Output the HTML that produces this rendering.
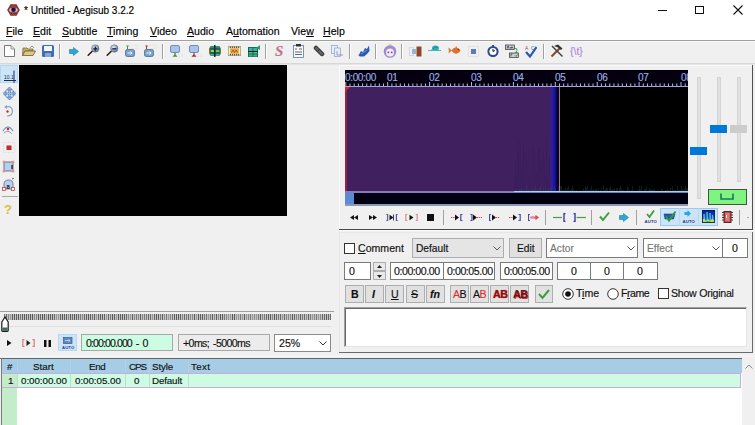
<!DOCTYPE html>
<html><head><meta charset="utf-8">
<style>
*{box-sizing:border-box;margin:0;padding:0}
html,body{width:755px;height:425px;overflow:hidden;background:#f0f0f0;font-family:"Liberation Sans",sans-serif;font-size:10px;color:#000;position:relative}
.a{position:absolute}
.t{position:absolute;white-space:nowrap;line-height:1;-webkit-text-stroke:0.15px currentColor}
u{text-decoration:none;border-bottom:1px solid #000}
</style></head><body>
<div class="a" style="left:0px;top:0px;width:755px;height:40px;background:#fff"></div>
<svg class="a" style="left:7px;top:4px;" width="13" height="12" viewBox="0 0 13 12"><polygon points="3.5,0.3 9.5,0.3 12.8,6 9.5,11.7 3.5,11.7 0.2,6" fill="#7a2e2e"/><polygon points="4,1.2 9,1.2 11.8,6 9,10.8 4,10.8 1.2,6" fill="#9a4040"/><ellipse cx="6.5" cy="6" rx="4.3" ry="2.2" fill="#e0b8c0"/><circle cx="6.5" cy="5.8" r="2.3" fill="#1a1440"/><path d="M4 9.5 H9" stroke="#6a2020" stroke-width="0.8" stroke-dasharray="1 1"/></svg>
<div class="t" style="left:24px;top:6px;font-size:10px;color:#000">* Untitled - Aegisub 3.2.2</div>
<div class="a" style="left:658px;top:10px;width:9px;height:1px;background:#111"></div>
<div class="a" style="left:695px;top:6px;width:9px;height:8px;border:1px solid #111"></div>
<svg class="a" style="left:733px;top:5px;" width="11" height="10" viewBox="0 0 11 10"><path d="M0.5 0.5 L9.5 9.5 M9.5 0.5 L0.5 9.5" stroke="#111" stroke-width="1.1"/></svg>
<div class="t" style="left:6px;top:26px;font-size:10.6px;color:#000"><span style="text-decoration:underline">F</span>ile</div>
<div class="t" style="left:33px;top:26px;font-size:10.6px;color:#000"><span style="text-decoration:underline">E</span>dit</div>
<div class="t" style="left:62px;top:26px;font-size:10.6px;color:#000"><span style="text-decoration:underline">S</span>ubtitle</div>
<div class="t" style="left:107px;top:26px;font-size:10.6px;color:#000"><span style="text-decoration:underline">T</span>iming</div>
<div class="t" style="left:150px;top:26px;font-size:10.6px;color:#000"><span style="text-decoration:underline">V</span>ideo</div>
<div class="t" style="left:187px;top:26px;font-size:10.6px;color:#000"><span style="text-decoration:underline">A</span>udio</div>
<div class="t" style="left:226px;top:26px;font-size:10.6px;color:#000">A<span style="text-decoration:underline">u</span>tomation</div>
<div class="t" style="left:291px;top:26px;font-size:10.6px;color:#000">Vie<span style="text-decoration:underline">w</span></div>
<div class="t" style="left:323px;top:26px;font-size:10.6px;color:#000"><span style="text-decoration:underline">H</span>elp</div>
<div class="a" style="left:0px;top:40px;width:755px;height:1px;background:#a0a0a0"></div>
<div class="a" style="left:0px;top:41px;width:755px;height:1px;background:#f8f8f8"></div>
<div class="a" style="left:0px;top:63px;width:755px;height:1px;background:#d8d8d8"></div>
<div class="a" style="left:0px;top:64px;width:755px;height:1px;background:#e4e4e4"></div>
<svg class="a" style="left:4px;top:45px;" width="11" height="12" viewBox="0 0 11 12"><path d="M0.5 0.5 H7 L10.5 4 V11.5 H0.5 Z" fill="#fff" stroke="#7a7a7a"/><path d="M7 0.5 V4 H10.5" fill="#ddd" stroke="#999"/></svg>
<svg class="a" style="left:22px;top:45px;" width="14" height="11" viewBox="0 0 14 11"><path d="M1 3 H5 L6 4 H11 V6 H3 L0.5 10.5 Z" fill="#c8b26a" stroke="#6e5e2a" stroke-width="0.7"/><path d="M3 6 H13.5 L11 10.5 H0.5 Z" fill="#dcc98a" stroke="#6e5e2a" stroke-width="0.8"/><path d="M8 3 Q10 -0.5 12 3" fill="none" stroke="#777" stroke-width="0.7"/></svg>
<svg class="a" style="left:42px;top:45px;" width="12" height="12" viewBox="0 0 12 12"><rect x="0" y="0" width="12" height="12" rx="1.5" fill="#3c6eb0"/><rect x="2" y="1" width="8" height="5" fill="#f4f4f4"/><rect x="3" y="8" width="6" height="4" fill="#8aa6cc"/></svg>
<div class="a" style="left:59px;top:44px;width:1px;height:15px;background:#a0a0a0"></div>
<div class="a" style="left:60px;top:44px;width:1px;height:15px;background:#fff"></div>
<svg class="a" style="left:69px;top:47px;" width="10" height="9" viewBox="0 0 10 9"><path d="M0.5 2.5 H4.5 V0.5 L9.5 4.5 L4.5 8.5 V6.5 H0.5 Z" fill="#2aa8d8" stroke="#1a7aa8" stroke-width="0.6"/></svg>
<svg class="a" style="left:87px;top:44px;" width="13" height="13" viewBox="0 0 13 13"><defs><radialGradient id="lg87" cx="0.4" cy="0.35" r="0.7"><stop offset="0" stop-color="#e8eef8"/><stop offset="0.6" stop-color="#8a9ab8"/><stop offset="1" stop-color="#4a5a7a"/></radialGradient></defs><path d="M1.2 11.2 L5.5 7" stroke="#3a1a10" stroke-width="1.6" stroke-linecap="round"/><circle cx="8.3" cy="4.5" r="3.7" fill="url(#lg87)" stroke="#6a7a98" stroke-width="0.6"/><path d="M6.3 4.8 H10.3" stroke="#1a2030" stroke-width="1.3"/><path d="M8.3 2.5 V6.8" stroke="#1a2030" stroke-width="1.3"/></svg>
<svg class="a" style="left:106px;top:44px;" width="13" height="13" viewBox="0 0 13 13"><defs><radialGradient id="lg106" cx="0.4" cy="0.35" r="0.7"><stop offset="0" stop-color="#e8eef8"/><stop offset="0.6" stop-color="#8a9ab8"/><stop offset="1" stop-color="#4a5a7a"/></radialGradient></defs><path d="M1.2 11.2 L5.5 7" stroke="#3a1a10" stroke-width="1.6" stroke-linecap="round"/><circle cx="8.3" cy="4.5" r="3.7" fill="url(#lg106)" stroke="#6a7a98" stroke-width="0.6"/><path d="M6.3 4.8 H10.3" stroke="#1a2030" stroke-width="1.3"/></svg>
<svg class="a" style="left:125px;top:45px;" width="13" height="12" viewBox="0 0 13 12"><rect x="4.5" y="0.5" width="8" height="3" fill="none" stroke="#d8d8d8" stroke-width="0.6" stroke-dasharray="1 1"/><path d="M1 0.5 H4 L2.5 2.5 Z" fill="#3a9a3a"/><rect x="2" y="2" width="1" height="2.5" fill="#3a9a3a"/><rect x="0.5" y="4.5" width="9" height="7" rx="1.8" fill="#7aa4cc" stroke="#4a6a8a" stroke-width="0.8"/><path d="M2.5 8 H7 M5.5 6.5 L7 8 L5.5 9.5" stroke="#fff" stroke-width="0.9" fill="none"/></svg>
<svg class="a" style="left:144px;top:45px;" width="13" height="12" viewBox="0 0 13 12"><rect x="4.5" y="0.5" width="8" height="3" fill="none" stroke="#d8d8d8" stroke-width="0.6" stroke-dasharray="1 1"/><path d="M1 0.5 H4 L2.5 2.5 Z" fill="#b03030"/><rect x="2" y="2" width="1" height="2.5" fill="#b03030"/><rect x="0.5" y="4.5" width="9" height="7" rx="1.8" fill="#7aa4cc" stroke="#4a6a8a" stroke-width="0.8"/><path d="M2.5 8 H7 M5.5 6.5 L7 8 L5.5 9.5" stroke="#fff" stroke-width="0.9" fill="none"/></svg>
<div class="a" style="left:162px;top:44px;width:1px;height:15px;background:#a0a0a0"></div>
<div class="a" style="left:163px;top:44px;width:1px;height:15px;background:#fff"></div>
<svg class="a" style="left:170px;top:45px;" width="13" height="12" viewBox="0 0 13 12"><rect x="0.5" y="0.5" width="9" height="7" rx="1.5" fill="#a8c4e8" stroke="#5a7aa8" stroke-width="0.8"/><rect x="4.3" y="7.5" width="1.4" height="2" fill="#777"/><path d="M2.5 11.8 L5 8.8 L7.5 11.8 Z" fill="#3a9a3a"/><rect x="7.5" y="9.5" width="5" height="2" fill="none" stroke="#d8d8d8" stroke-width="0.6" stroke-dasharray="1 1"/></svg>
<svg class="a" style="left:189px;top:45px;" width="13" height="12" viewBox="0 0 13 12"><rect x="0.5" y="0.5" width="9" height="7" rx="1.5" fill="#a8c4e8" stroke="#5a7aa8" stroke-width="0.8"/><rect x="4.3" y="7.5" width="1.4" height="2" fill="#777"/><path d="M2.5 11.8 L5 8.8 L7.5 11.8 Z" fill="#b03030"/><rect x="7.5" y="9.5" width="5" height="2" fill="none" stroke="#d8d8d8" stroke-width="0.6" stroke-dasharray="1 1"/></svg>
<svg class="a" style="left:209px;top:45px;" width="12" height="12" viewBox="0 0 12 12"><rect x="0" y="2" width="12" height="8" rx="2" fill="#8a6a2a"/><rect x="1" y="1" width="10" height="10" rx="1" fill="#2a8a7a"/><path d="M1 4 H11 M1 8 H11" stroke="#1a3a3a" stroke-width="1"/><rect x="5" y="0" width="1.5" height="12" fill="#1a2a2a"/><rect x="2" y="5" width="3" height="2" fill="#a0d040"/><rect x="7" y="5" width="3" height="2" fill="#80c040"/><rect x="1.5" y="9" width="3" height="1.5" fill="#4ab0a0"/><rect x="7" y="9" width="3" height="1.5" fill="#4ab0a0"/></svg>
<svg class="a" style="left:228px;top:46px;" width="13" height="10" viewBox="0 0 13 10"><rect x="0" y="0" width="13" height="10" rx="1" fill="#d8d0a0" stroke="#8a8060" stroke-width="0.8"/><path d="M2 1.2 H11 M2 8.8 H11" stroke="#222" stroke-width="1" stroke-dasharray="1 1"/><rect x="2.5" y="2.5" width="8" height="5" fill="#e8a050"/><path d="M3.5 6.5 L5 4 L6.5 6.5 L8 4 L9.5 6.5" stroke="#c05a10" stroke-width="1" fill="none"/><path d="M1.5 2 V8 M11.5 2 V8" stroke="#f8f0b0" stroke-width="1"/></svg>
<svg class="a" style="left:248px;top:45px;" width="12" height="12" viewBox="0 0 12 12"><rect x="0" y="2" width="10" height="10" fill="#1a6a5a"/><rect x="1" y="3" width="3.5" height="3" fill="#3ab0a0"/><rect x="5.5" y="3" width="3.5" height="3" fill="#3ab0a0"/><rect x="1" y="7" width="3.5" height="1.5" fill="#60c060"/><rect x="5.5" y="7" width="3.5" height="1.5" fill="#60c060"/><rect x="1" y="9.5" width="3.5" height="2" fill="#3ab0a0"/><rect x="5.5" y="9.5" width="3.5" height="2" fill="#3ab0a0"/><path d="M0 6.5 H10" stroke="#0a2a2a" stroke-width="1"/><path d="M8 3 L12 0 V5 Z" fill="#2a9a7a"/></svg>
<div class="a" style="left:265px;top:44px;width:1px;height:15px;background:#a0a0a0"></div>
<div class="a" style="left:266px;top:44px;width:1px;height:15px;background:#fff"></div>
<div class="t" style="left:275px;top:44px;font-size:15px;font-style:italic;font-weight:bold;color:#c87090;font-family:Liberation Serif,serif">S</div>
<svg class="a" style="left:293px;top:44px;" width="11" height="14" viewBox="0 0 11 14"><rect x="0.5" y="1.5" width="10" height="12" fill="#f8f8f8" stroke="#5a7ab0" stroke-width="0.8"/><rect x="3" y="0" width="5" height="2.5" fill="#333"/><path d="M2 5 H4 M6 5 H9 M2 8 H9 M2 10.5 H9" stroke="#555" stroke-width="0.9"/></svg>
<svg class="a" style="left:313px;top:45px;" width="12" height="12" viewBox="0 0 12 12"><path d="M3 3 L9 9" stroke="#3a3a3a" stroke-width="4.5" stroke-linecap="round"/><path d="M3 3 L9 9" stroke="#6a6a6a" stroke-width="2" stroke-linecap="round"/><path d="M4.5 6.5 L6.5 4.5" stroke="#222" stroke-width="0.8"/></svg>
<svg class="a" style="left:331px;top:45px;" width="13" height="12" viewBox="0 0 13 12"><rect x="0.5" y="0.5" width="6" height="8" fill="#e8eef8" stroke="#8aa0c8" stroke-width="0.7"/><rect x="3.5" y="3" width="6" height="8.5" fill="#e8eef8" stroke="#8aa0c8" stroke-width="0.7"/><path d="M6 6 V10 H12" stroke="#7a8aa8" stroke-width="0.8" fill="none"/></svg>
<div class="a" style="left:349px;top:44px;width:1px;height:15px;background:#a0a0a0"></div>
<div class="a" style="left:350px;top:44px;width:1px;height:15px;background:#fff"></div>
<svg class="a" style="left:358px;top:45px;" width="12" height="12" viewBox="0 0 12 12"><path d="M0.5 10.5 L3 6 L5 7 L7 3 L9 4 L11 0.5 L11.5 6 L9 9 L6 11.5 L2 11.5 Z" fill="#2a5ab0"/><path d="M3 9 L6 7 L9 5" stroke="#7aaae8" stroke-width="0.8"/></svg>
<div class="a" style="left:375px;top:44px;width:1px;height:15px;background:#a0a0a0"></div>
<div class="a" style="left:376px;top:44px;width:1px;height:15px;background:#fff"></div>
<svg class="a" style="left:383px;top:44px;" width="14" height="14" viewBox="0 0 14 14"><circle cx="7" cy="7.5" r="6.3" fill="#9a8ad8"/><circle cx="7" cy="8.5" r="4" fill="#f8e8e8"/><circle cx="5.3" cy="8.3" r="0.9" fill="#6a4aa8"/><circle cx="8.7" cy="8.3" r="0.9" fill="#6a4aa8"/><path d="M5 1.5 L7 0.3 L9 1.5" stroke="#e8c060" stroke-width="0.8" fill="none"/></svg>
<div class="a" style="left:401px;top:44px;width:1px;height:15px;background:#a0a0a0"></div>
<div class="a" style="left:402px;top:44px;width:1px;height:15px;background:#fff"></div>
<svg class="a" style="left:409px;top:46px;" width="14" height="11" viewBox="0 0 14 11"><rect x="0.5" y="1.5" width="4" height="8" fill="none" stroke="#8aa0c8" stroke-width="0.6" stroke-dasharray="1 1"/><rect x="3" y="3" width="4" height="5" fill="#9ab4d8"/><rect x="7.5" y="0.5" width="5" height="10" fill="#8a4a2a"/></svg>
<svg class="a" style="left:428px;top:45px;" width="14" height="8" viewBox="0 0 14 8"><path d="M0 5.5 H13" stroke="#3aa0b8" stroke-width="0.8"/><ellipse cx="7.5" cy="3" rx="3.5" ry="2.6" fill="#2ab0b0"/><path d="M5 4 Q7 1 9.5 2.5" stroke="#1a7a8a" stroke-width="0.7" fill="none"/><path d="M3.5 5.5 Q4 3.5 5.5 4" stroke="#2a9aa8" stroke-width="0.8" fill="none"/></svg>
<svg class="a" style="left:448px;top:46px;" width="13" height="9" viewBox="0 0 13 9"><path d="M3.5 4.5 Q6 0.3 10 2 Q12.8 3.5 12.5 4.5 Q12 6.5 9 7.5 Q6 8.5 3.5 4.5 Z" fill="#e0702a"/><path d="M0.3 1.5 L4 4.5 L0.3 7.5 Q1.5 4.5 0.3 1.5 Z" fill="#e0702a"/><path d="M7 1.3 L8.5 0.2 L9 1.8 Z" fill="#c05a20"/><circle cx="10.3" cy="3.6" r="0.6" fill="#333"/></svg>
<svg class="a" style="left:468px;top:46px;" width="11" height="11" viewBox="0 0 11 11"><rect x="0.5" y="0.5" width="10" height="10" fill="none" stroke="#b8c0d0" stroke-width="0.6" stroke-dasharray="1 1"/><rect x="3" y="3" width="5" height="5" fill="#5a7ab8"/></svg>
<svg class="a" style="left:487px;top:45px;" width="12" height="12" viewBox="0 0 12 12"><circle cx="6" cy="6.5" r="4.6" fill="#fff" stroke="#2a4a8a" stroke-width="2"/><rect x="5" y="0" width="2" height="1.5" fill="#2a4a8a"/><path d="M6 6.5 V4 M6 6.5 L7.8 5.5" stroke="#111" stroke-width="1" fill="none"/></svg>
<svg class="a" style="left:505px;top:44px;" width="15" height="14" viewBox="0 0 15 14"><rect x="0.5" y="1" width="9" height="4.5" fill="#c8d0d8" stroke="#333" stroke-width="0.7"/><path d="M2 4.5 L3 1.8 L4 4.5 M5.3 4.5 V3 M6.5 4.5 V3 Q8 2.5 8 4.5" stroke="#111" stroke-width="0.6" fill="none"/><path d="M10 4.5 Q12.5 4 12 6.5 L10.5 9 H13" stroke="#3aa040" stroke-width="1" fill="none"/><rect x="4.5" y="9" width="9" height="4.5" fill="#c8d0d8" stroke="#333" stroke-width="0.7"/><path d="M6 12.5 V10 H7.5 M10 11.5 L11 12.5 L12.5 10.5" stroke="#222" stroke-width="0.6" fill="none"/></svg>
<svg class="a" style="left:525px;top:45px;" width="12" height="13" viewBox="0 0 12 13"><path d="M1 7 L5 11.5 L11.5 2" stroke="#2a5ab0" stroke-width="2.2" fill="none"/><text x="0" y="5" font-size="5" fill="#c04040" font-family="Liberation Sans">A</text><text x="6" y="4.5" font-size="5" fill="#3a6ab0" font-family="Liberation Sans">C</text></svg>
<div class="a" style="left:543px;top:44px;width:1px;height:15px;background:#a0a0a0"></div>
<div class="a" style="left:544px;top:44px;width:1px;height:15px;background:#fff"></div>
<svg class="a" style="left:550px;top:44px;" width="14" height="14" viewBox="0 0 14 14"><path d="M1.5 12.5 L10 4" stroke="#8a4a2a" stroke-width="2.2"/><path d="M4 2 L8 0.5 L12.5 4.5 L11 6 L8 3.5 Z" fill="#333"/><path d="M2 2 L12.5 12.5" stroke="#444" stroke-width="1.5"/></svg>
<div class="t" style="left:570px;top:46px;font-size:10.5px;color:#b08ae0">{\t}</div>
<div class="a" style="left:0px;top:65px;width:18px;height:18px;background:#cce4f7;border:1px solid #b4d8f4"></div>
<svg class="a" style="left:3px;top:70px;" width="13" height="13" viewBox="0 0 13 13"><text x="1" y="9" font-size="5" font-family="Liberation Sans" fill="#1a2a5a">10.1</text><path d="M1 10.5 H13" stroke="#1a2a5a" stroke-width="1"/><path d="M11 0.5 V13" stroke="#1a2a5a" stroke-width="1"/></svg>
<svg class="a" style="left:3px;top:87px;" width="13" height="13" viewBox="0 0 13 13"><path d="M6.5 2 V11 M2 6.5 H11" stroke="#4a78b8" stroke-width="2.2"/><path d="M6.5 2 V11 M2 6.5 H11" stroke="#9cc0ec" stroke-width="1"/><path d="M6.5 0 L9.5 3 H3.5 Z M6.5 13 L9.5 10 H3.5 Z M0 6.5 L3 3.5 V9.5 Z M13 6.5 L10 3.5 V9.5 Z" fill="#8ab4e8" stroke="#4a78b8" stroke-width="0.7" stroke-linejoin="round"/></svg>
<svg class="a" style="left:3px;top:105px;" width="11" height="12" viewBox="0 0 11 12"><path d="M3 2 Q9 0.5 9.5 6 Q9.5 11 4 11" stroke="#8aa0c8" stroke-width="1.2" fill="none"/><path d="M1 2 L4 0 L4 4 Z" fill="#8aa0c8"/><circle cx="4.5" cy="6.5" r="1.2" fill="#c03030"/></svg>
<svg class="a" style="left:2px;top:123px;" width="12" height="12" viewBox="0 0 12 12"><path d="M1 8 Q6 0 11 8" stroke="#6a8ac0" stroke-width="1.2" fill="none"/><path d="M2 10 Q6 6 10 11" stroke="#8aa0c8" stroke-width="1" fill="none"/><circle cx="6" cy="6" r="1.3" fill="#c03030"/></svg>
<svg class="a" style="left:3px;top:142px;" width="12" height="11" viewBox="0 0 12 11"><rect x="0.5" y="0.5" width="11" height="10" fill="none" stroke="#d0c8c8" stroke-width="0.6" stroke-dasharray="1 1.2"/><rect x="3.5" y="3.5" width="5" height="4.5" fill="#c02a2a"/></svg>
<svg class="a" style="left:2px;top:160px;" width="13" height="13" viewBox="0 0 13 13"><rect x="2" y="2" width="9" height="9" fill="#b8d0f0" stroke="#4a5a7a" stroke-width="0.8"/><circle cx="2" cy="2" r="1.5" fill="#e89090"/><circle cx="11" cy="2" r="1.5" fill="#e89090"/><circle cx="2" cy="11" r="1.5" fill="#e89090"/><circle cx="11" cy="11" r="1.5" fill="#e89090"/><path d="M10 5 V9" stroke="#111" stroke-width="1.2"/></svg>
<svg class="a" style="left:2px;top:178px;" width="13" height="13" viewBox="0 0 13 13"><path d="M2 11 V6 Q2 2 6.5 2 Q11 2 11 6 V11 Z" fill="#b8d0f0" stroke="#5a6a8a" stroke-width="0.8"/><rect x="0.5" y="9.5" width="3" height="3" fill="#fff" stroke="#c04040" stroke-width="0.8"/><rect x="9.5" y="9.5" width="3" height="3" fill="#fff" stroke="#c04040" stroke-width="0.8"/><text x="4.5" y="11" font-size="6" font-weight="bold" font-family="Liberation Sans" fill="#111">8</text><path d="M10 1 L12 0" stroke="#333" stroke-width="0.8"/></svg>
<div class="a" style="left:2px;top:196px;width:16px;height:1px;background:#a8a8a8"></div>
<div class="t" style="left:4px;top:203px;font-size:13px;font-weight:bold;color:#d8c050">?</div>
<div class="a" style="left:19px;top:65px;width:268px;height:151px;background:#000"></div>
<div class="a" style="left:0px;top:311px;width:334px;height:1px;background:#a0a0a0"></div>
<svg class="a" style="left:4px;top:314px;" width="327" height="6" viewBox="0 0 327 6"><rect width="327" height="6" fill="#c4c4c4"/><rect x="0" y="0" width="1" height="6" fill="#7a7a7a"/><rect x="2" y="0" width="1" height="6" fill="#6a6a6a"/><rect x="4" y="0" width="1" height="6" fill="#8a8a8a"/><rect x="6" y="0" width="1" height="6" fill="#9a9a9a"/><rect x="8" y="0" width="1" height="6" fill="#5a5a5a"/><rect x="10" y="0" width="1" height="6" fill="#5a5a5a"/><rect x="12" y="0" width="1" height="6" fill="#606060"/><rect x="14" y="0" width="1" height="6" fill="#5a5a5a"/><rect x="16" y="0" width="1" height="6" fill="#7a7a7a"/><rect x="18" y="0" width="1" height="6" fill="#606060"/><rect x="20" y="0" width="1" height="6" fill="#5a5a5a"/><rect x="22" y="0" width="1" height="6" fill="#606060"/><rect x="24" y="0" width="1" height="6" fill="#6a6a6a"/><rect x="26" y="0" width="1" height="6" fill="#5a5a5a"/><rect x="28" y="0" width="1" height="6" fill="#5a5a5a"/><rect x="30" y="0" width="1" height="6" fill="#8a8a8a"/><rect x="32" y="0" width="1" height="6" fill="#8a8a8a"/><rect x="34" y="0" width="1" height="6" fill="#5a5a5a"/><rect x="36" y="0" width="1" height="6" fill="#6a6a6a"/><rect x="38" y="0" width="1" height="6" fill="#5a5a5a"/><rect x="40" y="0" width="1" height="6" fill="#606060"/><rect x="42" y="0" width="1" height="6" fill="#8a8a8a"/><rect x="44" y="0" width="1" height="6" fill="#5a5a5a"/><rect x="46" y="0" width="1" height="6" fill="#606060"/><rect x="48" y="0" width="1" height="6" fill="#5a5a5a"/><rect x="50" y="0" width="1" height="6" fill="#6a6a6a"/><rect x="52" y="0" width="1" height="6" fill="#9a9a9a"/><rect x="54" y="0" width="1" height="6" fill="#9a9a9a"/><rect x="56" y="0" width="1" height="6" fill="#606060"/><rect x="58" y="0" width="1" height="6" fill="#5a5a5a"/><rect x="60" y="0" width="1" height="6" fill="#606060"/><rect x="62" y="0" width="1" height="6" fill="#606060"/><rect x="64" y="0" width="1" height="6" fill="#8a8a8a"/><rect x="66" y="0" width="1" height="6" fill="#5a5a5a"/><rect x="68" y="0" width="1" height="6" fill="#6a6a6a"/><rect x="70" y="0" width="1" height="6" fill="#5a5a5a"/><rect x="72" y="0" width="1" height="6" fill="#606060"/><rect x="74" y="0" width="1" height="6" fill="#6a6a6a"/><rect x="76" y="0" width="1" height="6" fill="#7a7a7a"/><rect x="78" y="0" width="1" height="6" fill="#8a8a8a"/><rect x="80" y="0" width="1" height="6" fill="#6a6a6a"/><rect x="82" y="0" width="1" height="6" fill="#606060"/><rect x="84" y="0" width="1" height="6" fill="#5a5a5a"/><rect x="86" y="0" width="1" height="6" fill="#606060"/><rect x="88" y="0" width="1" height="6" fill="#7a7a7a"/><rect x="90" y="0" width="1" height="6" fill="#606060"/><rect x="92" y="0" width="1" height="6" fill="#9a9a9a"/><rect x="94" y="0" width="1" height="6" fill="#6a6a6a"/><rect x="96" y="0" width="1" height="6" fill="#5a5a5a"/><rect x="98" y="0" width="1" height="6" fill="#606060"/><rect x="100" y="0" width="1" height="6" fill="#606060"/><rect x="102" y="0" width="1" height="6" fill="#9a9a9a"/><rect x="104" y="0" width="1" height="6" fill="#6a6a6a"/><rect x="106" y="0" width="1" height="6" fill="#7a7a7a"/><rect x="108" y="0" width="1" height="6" fill="#5a5a5a"/><rect x="110" y="0" width="1" height="6" fill="#606060"/><rect x="112" y="0" width="1" height="6" fill="#9a9a9a"/><rect x="114" y="0" width="1" height="6" fill="#5a5a5a"/><rect x="116" y="0" width="1" height="6" fill="#606060"/><rect x="118" y="0" width="1" height="6" fill="#5a5a5a"/><rect x="120" y="0" width="1" height="6" fill="#606060"/><rect x="122" y="0" width="1" height="6" fill="#6a6a6a"/><rect x="124" y="0" width="1" height="6" fill="#8a8a8a"/><rect x="126" y="0" width="1" height="6" fill="#9a9a9a"/><rect x="128" y="0" width="1" height="6" fill="#606060"/><rect x="130" y="0" width="1" height="6" fill="#8a8a8a"/><rect x="132" y="0" width="1" height="6" fill="#7a7a7a"/><rect x="134" y="0" width="1" height="6" fill="#8a8a8a"/><rect x="136" y="0" width="1" height="6" fill="#606060"/><rect x="138" y="0" width="1" height="6" fill="#8a8a8a"/><rect x="140" y="0" width="1" height="6" fill="#7a7a7a"/><rect x="142" y="0" width="1" height="6" fill="#7a7a7a"/><rect x="144" y="0" width="1" height="6" fill="#6a6a6a"/><rect x="146" y="0" width="1" height="6" fill="#6a6a6a"/><rect x="148" y="0" width="1" height="6" fill="#9a9a9a"/><rect x="150" y="0" width="1" height="6" fill="#6a6a6a"/><rect x="152" y="0" width="1" height="6" fill="#5a5a5a"/><rect x="154" y="0" width="1" height="6" fill="#606060"/><rect x="156" y="0" width="1" height="6" fill="#7a7a7a"/><rect x="158" y="0" width="1" height="6" fill="#606060"/><rect x="160" y="0" width="1" height="6" fill="#8a8a8a"/><rect x="162" y="0" width="1" height="6" fill="#7a7a7a"/><rect x="164" y="0" width="1" height="6" fill="#9a9a9a"/><rect x="166" y="0" width="1" height="6" fill="#8a8a8a"/><rect x="168" y="0" width="1" height="6" fill="#7a7a7a"/><rect x="170" y="0" width="1" height="6" fill="#606060"/><rect x="172" y="0" width="1" height="6" fill="#5a5a5a"/><rect x="174" y="0" width="1" height="6" fill="#5a5a5a"/><rect x="176" y="0" width="1" height="6" fill="#606060"/><rect x="178" y="0" width="1" height="6" fill="#8a8a8a"/><rect x="180" y="0" width="1" height="6" fill="#6a6a6a"/><rect x="182" y="0" width="1" height="6" fill="#7a7a7a"/><rect x="184" y="0" width="1" height="6" fill="#6a6a6a"/><rect x="186" y="0" width="1" height="6" fill="#8a8a8a"/><rect x="188" y="0" width="1" height="6" fill="#8a8a8a"/><rect x="190" y="0" width="1" height="6" fill="#5a5a5a"/><rect x="192" y="0" width="1" height="6" fill="#9a9a9a"/><rect x="194" y="0" width="1" height="6" fill="#5a5a5a"/><rect x="196" y="0" width="1" height="6" fill="#606060"/><rect x="198" y="0" width="1" height="6" fill="#606060"/><rect x="200" y="0" width="1" height="6" fill="#7a7a7a"/><rect x="202" y="0" width="1" height="6" fill="#7a7a7a"/><rect x="204" y="0" width="1" height="6" fill="#9a9a9a"/><rect x="206" y="0" width="1" height="6" fill="#7a7a7a"/><rect x="208" y="0" width="1" height="6" fill="#606060"/><rect x="210" y="0" width="1" height="6" fill="#8a8a8a"/><rect x="212" y="0" width="1" height="6" fill="#606060"/><rect x="214" y="0" width="1" height="6" fill="#8a8a8a"/><rect x="216" y="0" width="1" height="6" fill="#5a5a5a"/><rect x="218" y="0" width="1" height="6" fill="#5a5a5a"/><rect x="220" y="0" width="1" height="6" fill="#7a7a7a"/><rect x="222" y="0" width="1" height="6" fill="#8a8a8a"/><rect x="224" y="0" width="1" height="6" fill="#9a9a9a"/><rect x="226" y="0" width="1" height="6" fill="#9a9a9a"/><rect x="228" y="0" width="1" height="6" fill="#5a5a5a"/><rect x="230" y="0" width="1" height="6" fill="#5a5a5a"/><rect x="232" y="0" width="1" height="6" fill="#9a9a9a"/><rect x="234" y="0" width="1" height="6" fill="#9a9a9a"/><rect x="236" y="0" width="1" height="6" fill="#7a7a7a"/><rect x="238" y="0" width="1" height="6" fill="#9a9a9a"/><rect x="240" y="0" width="1" height="6" fill="#606060"/><rect x="242" y="0" width="1" height="6" fill="#9a9a9a"/><rect x="244" y="0" width="1" height="6" fill="#8a8a8a"/><rect x="246" y="0" width="1" height="6" fill="#7a7a7a"/><rect x="248" y="0" width="1" height="6" fill="#9a9a9a"/><rect x="250" y="0" width="1" height="6" fill="#8a8a8a"/><rect x="252" y="0" width="1" height="6" fill="#9a9a9a"/><rect x="254" y="0" width="1" height="6" fill="#7a7a7a"/><rect x="256" y="0" width="1" height="6" fill="#5a5a5a"/><rect x="258" y="0" width="1" height="6" fill="#8a8a8a"/><rect x="260" y="0" width="1" height="6" fill="#7a7a7a"/><rect x="262" y="0" width="1" height="6" fill="#6a6a6a"/><rect x="264" y="0" width="1" height="6" fill="#606060"/><rect x="266" y="0" width="1" height="6" fill="#5a5a5a"/><rect x="268" y="0" width="1" height="6" fill="#8a8a8a"/><rect x="270" y="0" width="1" height="6" fill="#5a5a5a"/><rect x="272" y="0" width="1" height="6" fill="#6a6a6a"/><rect x="274" y="0" width="1" height="6" fill="#7a7a7a"/><rect x="276" y="0" width="1" height="6" fill="#6a6a6a"/><rect x="278" y="0" width="1" height="6" fill="#9a9a9a"/><rect x="280" y="0" width="1" height="6" fill="#6a6a6a"/><rect x="282" y="0" width="1" height="6" fill="#8a8a8a"/><rect x="284" y="0" width="1" height="6" fill="#8a8a8a"/><rect x="286" y="0" width="1" height="6" fill="#8a8a8a"/><rect x="288" y="0" width="1" height="6" fill="#5a5a5a"/><rect x="290" y="0" width="1" height="6" fill="#6a6a6a"/><rect x="292" y="0" width="1" height="6" fill="#8a8a8a"/><rect x="294" y="0" width="1" height="6" fill="#8a8a8a"/><rect x="296" y="0" width="1" height="6" fill="#606060"/><rect x="298" y="0" width="1" height="6" fill="#7a7a7a"/><rect x="300" y="0" width="1" height="6" fill="#6a6a6a"/><rect x="302" y="0" width="1" height="6" fill="#8a8a8a"/><rect x="304" y="0" width="1" height="6" fill="#606060"/><rect x="306" y="0" width="1" height="6" fill="#7a7a7a"/><rect x="308" y="0" width="1" height="6" fill="#9a9a9a"/><rect x="310" y="0" width="1" height="6" fill="#8a8a8a"/><rect x="312" y="0" width="1" height="6" fill="#7a7a7a"/><rect x="314" y="0" width="1" height="6" fill="#9a9a9a"/><rect x="316" y="0" width="1" height="6" fill="#8a8a8a"/><rect x="318" y="0" width="1" height="6" fill="#6a6a6a"/><rect x="320" y="0" width="1" height="6" fill="#6a6a6a"/><rect x="322" y="0" width="1" height="6" fill="#5a5a5a"/><rect x="324" y="0" width="1" height="6" fill="#6a6a6a"/><rect x="326" y="0" width="1" height="6" fill="#6a6a6a"/></svg>
<div class="a" style="left:3px;top:326px;width:328px;height:1px;background:#e0e0e0"></div>
<svg class="a" style="left:1px;top:316px;" width="8" height="16" viewBox="0 0 8 16"><path d="M0.8 6 L4 1 L7.2 6 V14.6 Q7.2 15.3 6.5 15.3 H1.5 Q0.8 15.3 0.8 14.6 Z" fill="#fff" stroke="#1a1a1a" stroke-width="1.2"/><rect x="1.4" y="11.5" width="5.2" height="3.3" fill="#3a6a5a"/></svg>
<svg class="a" style="left:7px;top:340px;" width="5" height="6" viewBox="0 0 5 6"><path d="M0 0 L4.5 3 L0 6 Z" fill="#111"/></svg>
<svg class="a" style="left:22px;top:339px;" width="13" height="8" viewBox="0 0 13 8"><path d="M2.5 0.6 H0.8 V7.4 H2.5 M10.5 0.6 H12.2 V7.4 H10.5" stroke="#e07878" stroke-width="1.2" fill="none"/><path d="M4.5 1 L8.5 4 L4.5 7 Z" fill="#222"/></svg>
<svg class="a" style="left:44px;top:340px;" width="7" height="7" viewBox="0 0 7 7"><rect x="0" y="0" width="2.5" height="7" fill="#111"/><rect x="4.5" y="0" width="2.5" height="7" fill="#111"/></svg>
<div class="a" style="left:58px;top:334px;width:19px;height:17px;background:#cce4f7;border:1px solid #b4d8f4"></div>
<svg class="a" style="left:60px;top:336px;" width="15" height="14" viewBox="0 0 15 14"><rect x="3.5" y="1.5" width="8.5" height="6" fill="#5a8ac8" stroke="#3a5a8a" stroke-width="0.7"/><path d="M5 4.5 H10 M8.5 3.3 L10 4.5 L8.5 5.7" stroke="#dfe8f8" stroke-width="0.7" fill="none"/><text x="2" y="12.8" font-size="4.2" font-family="Liberation Sans" font-weight="bold" fill="#2a3a8a" letter-spacing="0.15">AUTO</text></svg>
<div class="a" style="left:81px;top:334px;width:92px;height:17px;background:#ccfde2;border:1px solid #a8a8a8"></div>
<div class="t" style="left:86px;top:338px;font-size:10.6px;letter-spacing:-0.92px;word-spacing:2px;color:#111">0:00:00.000 - 0</div>
<div class="a" style="left:178px;top:334px;width:92px;height:17px;background:#ececec;border:1px solid #a8a8a8"></div>
<div class="t" style="left:183px;top:338px;font-size:10.6px;letter-spacing:-0.6px;word-spacing:1.5px;color:#111">+0ms; -5000ms</div>
<div class="a" style="left:274px;top:334px;width:57px;height:18px;background:#fff;border:1px solid #8a8a8a"></div>
<div class="t" style="left:279px;top:338px;font-size:10.6px;color:#111">25%</div>
<svg class="a" style="left:319px;top:341px;" width="8" height="5" viewBox="0 0 8 5"><path d="M0.5 0.5 L4 4 L7.5 0.5" stroke="#333" stroke-width="1" fill="none"/></svg>
<div class="a" style="left:339px;top:65px;width:1px;height:164px;background:#fafafa"></div>
<div class="a" style="left:340px;top:65px;width:412px;height:1px;background:#fafafa"></div>
<div class="a" style="left:752px;top:65px;width:1px;height:164px;background:#505050"></div>
<div class="a" style="left:339px;top:229px;width:414px;height:1px;background:#484848"></div>
<div class="a" style="left:339px;top:230px;width:414px;height:1px;background:#fafafa"></div>
<div class="a" style="left:345px;top:70px;width:343px;height:136px;background:#000"></div>
<svg class="a" style="left:345px;top:70px;" width="343" height="17" viewBox="0 0 343 17"><rect width="343" height="16" fill="#050010"/><rect x="0.30" y="12" width="1" height="4" fill="#b4bce0"/><rect x="4.49" y="13.5" width="1" height="2.5" fill="#b4bce0"/><rect x="8.68" y="13.5" width="1" height="2.5" fill="#b4bce0"/><rect x="12.87" y="13.5" width="1" height="2.5" fill="#b4bce0"/><rect x="17.06" y="13.5" width="1" height="2.5" fill="#b4bce0"/><rect x="21.25" y="13.5" width="1" height="2.5" fill="#b4bce0"/><rect x="25.44" y="13.5" width="1" height="2.5" fill="#b4bce0"/><rect x="29.63" y="13.5" width="1" height="2.5" fill="#b4bce0"/><rect x="33.82" y="13.5" width="1" height="2.5" fill="#b4bce0"/><rect x="38.01" y="13.5" width="1" height="2.5" fill="#b4bce0"/><rect x="42.20" y="12" width="1" height="4" fill="#b4bce0"/><rect x="46.39" y="13.5" width="1" height="2.5" fill="#b4bce0"/><rect x="50.58" y="13.5" width="1" height="2.5" fill="#b4bce0"/><rect x="54.77" y="13.5" width="1" height="2.5" fill="#b4bce0"/><rect x="58.96" y="13.5" width="1" height="2.5" fill="#b4bce0"/><rect x="63.15" y="13.5" width="1" height="2.5" fill="#b4bce0"/><rect x="67.34" y="13.5" width="1" height="2.5" fill="#b4bce0"/><rect x="71.53" y="13.5" width="1" height="2.5" fill="#b4bce0"/><rect x="75.72" y="13.5" width="1" height="2.5" fill="#b4bce0"/><rect x="79.91" y="13.5" width="1" height="2.5" fill="#b4bce0"/><rect x="84.10" y="12" width="1" height="4" fill="#b4bce0"/><rect x="88.29" y="13.5" width="1" height="2.5" fill="#b4bce0"/><rect x="92.48" y="13.5" width="1" height="2.5" fill="#b4bce0"/><rect x="96.67" y="13.5" width="1" height="2.5" fill="#b4bce0"/><rect x="100.86" y="13.5" width="1" height="2.5" fill="#b4bce0"/><rect x="105.05" y="13.5" width="1" height="2.5" fill="#b4bce0"/><rect x="109.24" y="13.5" width="1" height="2.5" fill="#b4bce0"/><rect x="113.43" y="13.5" width="1" height="2.5" fill="#b4bce0"/><rect x="117.62" y="13.5" width="1" height="2.5" fill="#b4bce0"/><rect x="121.81" y="13.5" width="1" height="2.5" fill="#b4bce0"/><rect x="126.00" y="12" width="1" height="4" fill="#b4bce0"/><rect x="130.19" y="13.5" width="1" height="2.5" fill="#b4bce0"/><rect x="134.38" y="13.5" width="1" height="2.5" fill="#b4bce0"/><rect x="138.57" y="13.5" width="1" height="2.5" fill="#b4bce0"/><rect x="142.76" y="13.5" width="1" height="2.5" fill="#b4bce0"/><rect x="146.95" y="13.5" width="1" height="2.5" fill="#b4bce0"/><rect x="151.14" y="13.5" width="1" height="2.5" fill="#b4bce0"/><rect x="155.33" y="13.5" width="1" height="2.5" fill="#b4bce0"/><rect x="159.52" y="13.5" width="1" height="2.5" fill="#b4bce0"/><rect x="163.71" y="13.5" width="1" height="2.5" fill="#b4bce0"/><rect x="167.90" y="12" width="1" height="4" fill="#b4bce0"/><rect x="172.09" y="13.5" width="1" height="2.5" fill="#b4bce0"/><rect x="176.28" y="13.5" width="1" height="2.5" fill="#b4bce0"/><rect x="180.47" y="13.5" width="1" height="2.5" fill="#b4bce0"/><rect x="184.66" y="13.5" width="1" height="2.5" fill="#b4bce0"/><rect x="188.85" y="13.5" width="1" height="2.5" fill="#b4bce0"/><rect x="193.04" y="13.5" width="1" height="2.5" fill="#b4bce0"/><rect x="197.23" y="13.5" width="1" height="2.5" fill="#b4bce0"/><rect x="201.42" y="13.5" width="1" height="2.5" fill="#b4bce0"/><rect x="205.61" y="13.5" width="1" height="2.5" fill="#b4bce0"/><rect x="209.80" y="12" width="1" height="4" fill="#b4bce0"/><rect x="213.99" y="13.5" width="1" height="2.5" fill="#b4bce0"/><rect x="218.18" y="13.5" width="1" height="2.5" fill="#b4bce0"/><rect x="222.37" y="13.5" width="1" height="2.5" fill="#b4bce0"/><rect x="226.56" y="13.5" width="1" height="2.5" fill="#b4bce0"/><rect x="230.75" y="13.5" width="1" height="2.5" fill="#b4bce0"/><rect x="234.94" y="13.5" width="1" height="2.5" fill="#b4bce0"/><rect x="239.13" y="13.5" width="1" height="2.5" fill="#b4bce0"/><rect x="243.32" y="13.5" width="1" height="2.5" fill="#b4bce0"/><rect x="247.51" y="13.5" width="1" height="2.5" fill="#b4bce0"/><rect x="251.70" y="12" width="1" height="4" fill="#b4bce0"/><rect x="255.89" y="13.5" width="1" height="2.5" fill="#b4bce0"/><rect x="260.08" y="13.5" width="1" height="2.5" fill="#b4bce0"/><rect x="264.27" y="13.5" width="1" height="2.5" fill="#b4bce0"/><rect x="268.46" y="13.5" width="1" height="2.5" fill="#b4bce0"/><rect x="272.65" y="13.5" width="1" height="2.5" fill="#b4bce0"/><rect x="276.84" y="13.5" width="1" height="2.5" fill="#b4bce0"/><rect x="281.03" y="13.5" width="1" height="2.5" fill="#b4bce0"/><rect x="285.22" y="13.5" width="1" height="2.5" fill="#b4bce0"/><rect x="289.41" y="13.5" width="1" height="2.5" fill="#b4bce0"/><rect x="293.60" y="12" width="1" height="4" fill="#b4bce0"/><rect x="297.79" y="13.5" width="1" height="2.5" fill="#b4bce0"/><rect x="301.98" y="13.5" width="1" height="2.5" fill="#b4bce0"/><rect x="306.17" y="13.5" width="1" height="2.5" fill="#b4bce0"/><rect x="310.36" y="13.5" width="1" height="2.5" fill="#b4bce0"/><rect x="314.55" y="13.5" width="1" height="2.5" fill="#b4bce0"/><rect x="318.74" y="13.5" width="1" height="2.5" fill="#b4bce0"/><rect x="322.93" y="13.5" width="1" height="2.5" fill="#b4bce0"/><rect x="327.12" y="13.5" width="1" height="2.5" fill="#b4bce0"/><rect x="331.31" y="13.5" width="1" height="2.5" fill="#b4bce0"/><rect x="335.50" y="12" width="1" height="4" fill="#b4bce0"/><rect x="339.69" y="13.5" width="1" height="2.5" fill="#b4bce0"/><rect x="0" y="16" width="343" height="1" fill="#a8a0d8"/></svg>
<div class="a" style="left:345px;top:70px;width:343px;height:16px;overflow:hidden">
<div class="t" style="left:0px;top:3px;font-size:10px;color:#9aaee0;letter-spacing:-0.35px">0:00:00</div>
<div class="t" style="left:42px;top:3px;font-size:10px;color:#9aaee0;letter-spacing:-0.35px">01</div>
<div class="t" style="left:84px;top:3px;font-size:10px;color:#9aaee0;letter-spacing:-0.35px">02</div>
<div class="t" style="left:126px;top:3px;font-size:10px;color:#9aaee0;letter-spacing:-0.35px">03</div>
<div class="t" style="left:168px;top:3px;font-size:10px;color:#9aaee0;letter-spacing:-0.35px">04</div>
<div class="t" style="left:210px;top:3px;font-size:10px;color:#9aaee0;letter-spacing:-0.35px">05</div>
<div class="t" style="left:252px;top:3px;font-size:10px;color:#9aaee0;letter-spacing:-0.35px">06</div>
<div class="t" style="left:293px;top:3px;font-size:10px;color:#9aaee0;letter-spacing:-0.35px">07</div>
<div class="t" style="left:336px;top:3px;font-size:10px;color:#9aaee0;letter-spacing:-0.35px">08</div>
</div>
<div class="a" style="left:345px;top:87px;width:205px;height:105px;background:#40205e"></div>
<div class="a" style="left:345px;top:87px;width:206px;height:105px;background:#40205e"></div>
<svg class="a" style="left:550px;top:87px;" width="9" height="105" viewBox="0 0 9 105"><defs><linearGradient id="bg1" x1="0" x2="1"><stop offset="0" stop-color="#3a2270"/><stop offset="0.3" stop-color="#2a1aa8"/><stop offset="0.6" stop-color="#12108a"/><stop offset="0.8" stop-color="#000030"/><stop offset="1" stop-color="#000"/></linearGradient></defs><rect width="9" height="105" fill="url(#bg1)"/></svg>
<div class="a" style="left:559px;top:87px;width:1px;height:105px;background:#b06aa0"></div>
<div class="a" style="left:345px;top:87px;width:2px;height:104px;background:#9a2040"></div>
<svg class="a" style="left:345px;top:87px;" width="5" height="5" viewBox="0 0 5 5"><path d="M0 0 H5 L0 5 Z" fill="#e02020"/></svg>
<svg class="a" style="left:514px;top:87px;" width="36" height="105" viewBox="0 0 36 105"><rect x="0" y="89" width="1" height="16" fill="#30185a" opacity="0.2"/><rect x="1" y="72" width="1" height="33" fill="#30185a" opacity="0.3"/><rect x="2" y="91" width="1" height="14" fill="#30185a" opacity="0.3"/><rect x="3" y="51" width="1" height="54" fill="#30185a" opacity="0.2"/><rect x="4" y="65" width="1" height="40" fill="#30185a" opacity="0.3"/><rect x="5" y="53" width="1" height="52" fill="#30185a" opacity="0.12"/><rect x="6" y="57" width="1" height="48" fill="#30185a" opacity="0.2"/><rect x="7" y="80" width="1" height="25" fill="#30185a" opacity="0.12"/><rect x="8" y="74" width="1" height="31" fill="#30185a" opacity="0.3"/><rect x="9" y="56" width="1" height="49" fill="#30185a" opacity="0.3"/><rect x="10" y="65" width="1" height="40" fill="#30185a" opacity="0.12"/><rect x="11" y="63" width="1" height="42" fill="#30185a" opacity="0.2"/><rect x="12" y="67" width="1" height="38" fill="#30185a" opacity="0.12"/><rect x="13" y="74" width="1" height="31" fill="#30185a" opacity="0.12"/><rect x="14" y="54" width="1" height="51" fill="#30185a" opacity="0.12"/><rect x="15" y="89" width="1" height="16" fill="#30185a" opacity="0.3"/><rect x="16" y="78" width="1" height="27" fill="#30185a" opacity="0.12"/><rect x="17" y="58" width="1" height="47" fill="#30185a" opacity="0.12"/><rect x="18" y="50" width="1" height="55" fill="#30185a" opacity="0.12"/><rect x="19" y="63" width="1" height="42" fill="#30185a" opacity="0.12"/><rect x="20" y="60" width="1" height="45" fill="#30185a" opacity="0.2"/><rect x="21" y="70" width="1" height="35" fill="#30185a" opacity="0.12"/><rect x="22" y="84" width="1" height="21" fill="#30185a" opacity="0.3"/><rect x="23" y="90" width="1" height="15" fill="#30185a" opacity="0.12"/><rect x="24" y="61" width="1" height="44" fill="#30185a" opacity="0.3"/><rect x="25" y="62" width="1" height="43" fill="#30185a" opacity="0.2"/><rect x="26" y="69" width="1" height="36" fill="#30185a" opacity="0.12"/><rect x="27" y="73" width="1" height="32" fill="#30185a" opacity="0.2"/><rect x="28" y="60" width="1" height="45" fill="#30185a" opacity="0.12"/><rect x="29" y="66" width="1" height="39" fill="#30185a" opacity="0.12"/><rect x="30" y="71" width="1" height="34" fill="#30185a" opacity="0.2"/><rect x="31" y="88" width="1" height="17" fill="#30185a" opacity="0.3"/><rect x="32" y="50" width="1" height="55" fill="#30185a" opacity="0.3"/><rect x="33" y="93" width="1" height="12" fill="#30185a" opacity="0.3"/><rect x="34" y="71" width="1" height="34" fill="#30185a" opacity="0.12"/><rect x="35" y="69" width="1" height="36" fill="#30185a" opacity="0.2"/></svg>
<svg class="a" style="left:514px;top:185px;" width="174" height="7" viewBox="0 0 174 7"><rect x="1" y="4" width="1" height="2" fill="#2a4a6a" opacity="0.35"/><rect x="2" y="4" width="1" height="2" fill="#2a4a6a" opacity="0.35"/><rect x="4" y="5" width="1" height="1" fill="#2a4a6a" opacity="0.35"/><rect x="5" y="4" width="1" height="2" fill="#2a4a6a" opacity="0.35"/><rect x="6" y="5" width="1" height="1" fill="#2a4a6a" opacity="0.35"/><rect x="7" y="3" width="1" height="3" fill="#2a4a6a" opacity="0.35"/><rect x="8" y="4" width="1" height="2" fill="#2a4a6a" opacity="0.35"/><rect x="10" y="4" width="1" height="2" fill="#2a4a6a" opacity="0.35"/><rect x="12" y="1" width="1" height="5" fill="#2a4a6a" opacity="0.35"/><rect x="13" y="5" width="1" height="1" fill="#2a4a6a" opacity="0.35"/><rect x="14" y="5" width="1" height="1" fill="#2a4a6a" opacity="0.35"/><rect x="15" y="4" width="1" height="2" fill="#2a4a6a" opacity="0.35"/><rect x="18" y="3" width="1" height="3" fill="#2a4a6a" opacity="0.35"/><rect x="19" y="5" width="1" height="1" fill="#2a4a6a" opacity="0.35"/><rect x="20" y="4" width="1" height="2" fill="#2a4a6a" opacity="0.35"/><rect x="21" y="1" width="1" height="5" fill="#2a4a6a" opacity="0.35"/><rect x="22" y="4" width="1" height="2" fill="#2a4a6a" opacity="0.35"/><rect x="23" y="5" width="1" height="1" fill="#2a4a6a" opacity="0.35"/><rect x="24" y="5" width="1" height="1" fill="#2a4a6a" opacity="0.35"/><rect x="25" y="3" width="1" height="3" fill="#2a4a6a" opacity="0.35"/><rect x="26" y="1" width="1" height="5" fill="#2a4a6a" opacity="0.35"/><rect x="29" y="3" width="1" height="3" fill="#2a4a6a" opacity="0.35"/><rect x="31" y="1" width="1" height="5" fill="#2a4a6a" opacity="0.35"/><rect x="32" y="4" width="1" height="2" fill="#2a4a6a" opacity="0.35"/><rect x="33" y="5" width="1" height="1" fill="#2a4a6a" opacity="0.35"/><rect x="34" y="3" width="1" height="3" fill="#2a4a6a" opacity="0.35"/><rect x="36" y="3" width="1" height="3" fill="#2a4a6a" opacity="0.35"/><rect x="37" y="1" width="1" height="5" fill="#2a4a6a" opacity="0.35"/><rect x="40" y="1" width="1" height="5" fill="#2a4a6a" opacity="0.35"/><rect x="41" y="4" width="1" height="2" fill="#2a4a6a" opacity="0.35"/><rect x="43" y="5" width="1" height="1" fill="#2a4a6a" opacity="0.35"/><rect x="44" y="1" width="1" height="5" fill="#2a4a6a" opacity="0.35"/><rect x="46" y="1" width="1" height="5" fill="#2a4a6a" opacity="0.35"/><rect x="47" y="1" width="1" height="5" fill="#2a4a6a" opacity="0.35"/><rect x="48" y="5" width="1" height="1" fill="#2a4a6a" opacity="0.35"/><rect x="49" y="5" width="1" height="1" fill="#2a4a6a" opacity="0.35"/><rect x="50" y="4" width="1" height="2" fill="#2a4a6a" opacity="0.35"/><rect x="51" y="3" width="1" height="3" fill="#2a4a6a" opacity="0.35"/><rect x="52" y="5" width="1" height="1" fill="#2a4a6a" opacity="0.35"/><rect x="53" y="3" width="1" height="3" fill="#2a4a6a" opacity="0.35"/><rect x="54" y="1" width="1" height="5" fill="#2a4a6a" opacity="0.35"/><rect x="55" y="5" width="1" height="1" fill="#2a4a6a" opacity="0.35"/><rect x="56" y="5" width="1" height="1" fill="#2a4a6a" opacity="0.35"/><rect x="57" y="3" width="1" height="3" fill="#2a4a6a" opacity="0.35"/><rect x="58" y="1" width="1" height="5" fill="#2a4a6a" opacity="0.35"/><rect x="59" y="4" width="1" height="2" fill="#2a4a6a" opacity="0.35"/><rect x="60" y="5" width="1" height="1" fill="#2a4a6a" opacity="0.35"/><rect x="62" y="5" width="1" height="1" fill="#2a4a6a" opacity="0.35"/><rect x="66" y="5" width="1" height="1" fill="#2a4a6a" opacity="0.35"/><rect x="68" y="5" width="1" height="1" fill="#2a4a6a" opacity="0.35"/><rect x="69" y="3" width="1" height="3" fill="#2a4a6a" opacity="0.35"/><rect x="70" y="5" width="1" height="1" fill="#2a4a6a" opacity="0.35"/><rect x="71" y="1" width="1" height="5" fill="#2a4a6a" opacity="0.35"/><rect x="72" y="3" width="1" height="3" fill="#2a4a6a" opacity="0.35"/><rect x="73" y="1" width="1" height="5" fill="#2a4a6a" opacity="0.35"/><rect x="74" y="5" width="1" height="1" fill="#2a4a6a" opacity="0.35"/><rect x="75" y="5" width="1" height="1" fill="#2a4a6a" opacity="0.35"/><rect x="76" y="4" width="1" height="2" fill="#2a4a6a" opacity="0.35"/><rect x="77" y="1" width="1" height="5" fill="#2a4a6a" opacity="0.35"/><rect x="78" y="5" width="1" height="1" fill="#2a4a6a" opacity="0.35"/><rect x="79" y="4" width="1" height="2" fill="#2a4a6a" opacity="0.35"/><rect x="80" y="5" width="1" height="1" fill="#2a4a6a" opacity="0.35"/><rect x="81" y="4" width="1" height="2" fill="#2a4a6a" opacity="0.35"/><rect x="82" y="4" width="1" height="2" fill="#2a4a6a" opacity="0.35"/><rect x="83" y="5" width="1" height="1" fill="#2a4a6a" opacity="0.35"/><rect x="84" y="4" width="1" height="2" fill="#2a4a6a" opacity="0.35"/><rect x="86" y="5" width="1" height="1" fill="#2a4a6a" opacity="0.35"/><rect x="87" y="3" width="1" height="3" fill="#2a4a6a" opacity="0.35"/><rect x="89" y="1" width="1" height="5" fill="#2a4a6a" opacity="0.35"/><rect x="90" y="5" width="1" height="1" fill="#2a4a6a" opacity="0.35"/><rect x="91" y="4" width="1" height="2" fill="#2a4a6a" opacity="0.35"/><rect x="92" y="3" width="1" height="3" fill="#2a4a6a" opacity="0.35"/><rect x="93" y="3" width="1" height="3" fill="#2a4a6a" opacity="0.35"/><rect x="95" y="3" width="1" height="3" fill="#2a4a6a" opacity="0.35"/><rect x="96" y="1" width="1" height="5" fill="#2a4a6a" opacity="0.35"/><rect x="97" y="5" width="1" height="1" fill="#2a4a6a" opacity="0.35"/><rect x="98" y="4" width="1" height="2" fill="#2a4a6a" opacity="0.35"/><rect x="99" y="4" width="1" height="2" fill="#2a4a6a" opacity="0.35"/><rect x="100" y="4" width="1" height="2" fill="#2a4a6a" opacity="0.35"/><rect x="102" y="3" width="1" height="3" fill="#2a4a6a" opacity="0.35"/><rect x="103" y="3" width="1" height="3" fill="#2a4a6a" opacity="0.35"/><rect x="105" y="3" width="1" height="3" fill="#2a4a6a" opacity="0.35"/><rect x="106" y="1" width="1" height="5" fill="#2a4a6a" opacity="0.35"/><rect x="107" y="4" width="1" height="2" fill="#2a4a6a" opacity="0.35"/><rect x="108" y="5" width="1" height="1" fill="#2a4a6a" opacity="0.35"/><rect x="109" y="5" width="1" height="1" fill="#2a4a6a" opacity="0.35"/><rect x="112" y="5" width="1" height="1" fill="#2a4a6a" opacity="0.35"/><rect x="113" y="1" width="1" height="5" fill="#2a4a6a" opacity="0.35"/><rect x="114" y="3" width="1" height="3" fill="#2a4a6a" opacity="0.35"/><rect x="115" y="5" width="1" height="1" fill="#2a4a6a" opacity="0.35"/><rect x="117" y="5" width="1" height="1" fill="#2a4a6a" opacity="0.35"/><rect x="118" y="1" width="1" height="5" fill="#2a4a6a" opacity="0.35"/><rect x="120" y="5" width="1" height="1" fill="#2a4a6a" opacity="0.35"/><rect x="123" y="5" width="1" height="1" fill="#2a4a6a" opacity="0.35"/><rect x="124" y="5" width="1" height="1" fill="#2a4a6a" opacity="0.35"/><rect x="125" y="1" width="1" height="5" fill="#2a4a6a" opacity="0.35"/><rect x="126" y="5" width="1" height="1" fill="#2a4a6a" opacity="0.35"/><rect x="127" y="1" width="1" height="5" fill="#2a4a6a" opacity="0.35"/><rect x="130" y="4" width="1" height="2" fill="#2a4a6a" opacity="0.35"/><rect x="131" y="4" width="1" height="2" fill="#2a4a6a" opacity="0.35"/><rect x="132" y="1" width="1" height="5" fill="#2a4a6a" opacity="0.35"/><rect x="134" y="5" width="1" height="1" fill="#2a4a6a" opacity="0.35"/><rect x="135" y="3" width="1" height="3" fill="#2a4a6a" opacity="0.35"/><rect x="136" y="4" width="1" height="2" fill="#2a4a6a" opacity="0.35"/><rect x="137" y="5" width="1" height="1" fill="#2a4a6a" opacity="0.35"/><rect x="138" y="4" width="1" height="2" fill="#2a4a6a" opacity="0.35"/><rect x="139" y="5" width="1" height="1" fill="#2a4a6a" opacity="0.35"/><rect x="140" y="4" width="1" height="2" fill="#2a4a6a" opacity="0.35"/><rect x="143" y="5" width="1" height="1" fill="#2a4a6a" opacity="0.35"/><rect x="147" y="4" width="1" height="2" fill="#2a4a6a" opacity="0.35"/><rect x="148" y="4" width="1" height="2" fill="#2a4a6a" opacity="0.35"/><rect x="151" y="5" width="1" height="1" fill="#2a4a6a" opacity="0.35"/><rect x="152" y="5" width="1" height="1" fill="#2a4a6a" opacity="0.35"/><rect x="153" y="4" width="1" height="2" fill="#2a4a6a" opacity="0.35"/><rect x="154" y="5" width="1" height="1" fill="#2a4a6a" opacity="0.35"/><rect x="156" y="3" width="1" height="3" fill="#2a4a6a" opacity="0.35"/><rect x="158" y="1" width="1" height="5" fill="#2a4a6a" opacity="0.35"/><rect x="159" y="5" width="1" height="1" fill="#2a4a6a" opacity="0.35"/><rect x="160" y="5" width="1" height="1" fill="#2a4a6a" opacity="0.35"/><rect x="161" y="5" width="1" height="1" fill="#2a4a6a" opacity="0.35"/><rect x="163" y="1" width="1" height="5" fill="#2a4a6a" opacity="0.35"/><rect x="164" y="5" width="1" height="1" fill="#2a4a6a" opacity="0.35"/><rect x="165" y="5" width="1" height="1" fill="#2a4a6a" opacity="0.35"/><rect x="166" y="5" width="1" height="1" fill="#2a4a6a" opacity="0.35"/><rect x="167" y="1" width="1" height="5" fill="#2a4a6a" opacity="0.35"/><rect x="168" y="4" width="1" height="2" fill="#2a4a6a" opacity="0.35"/><rect x="169" y="5" width="1" height="1" fill="#2a4a6a" opacity="0.35"/><rect x="170" y="3" width="1" height="3" fill="#2a4a6a" opacity="0.35"/><rect x="171" y="1" width="1" height="5" fill="#2a4a6a" opacity="0.35"/><rect x="172" y="4" width="1" height="2" fill="#2a4a6a" opacity="0.35"/><rect x="173" y="3" width="1" height="3" fill="#2a4a6a" opacity="0.35"/><rect x="0" y="6" width="174" height="1" fill="#b0d0e8"/></svg>
<div class="a" style="left:345px;top:191px;width:169px;height:2px;background:#8a78b8"></div>
<div class="a" style="left:514px;top:192px;width:174px;height:1px;background:#6a88b0"></div>
<div class="a" style="left:345px;top:193px;width:343px;height:11px;background:#000010"></div>
<div class="a" style="left:345px;top:193px;width:9px;height:11px;background:#5a8ad8"></div>
<div class="a" style="left:345px;top:204px;width:343px;height:2px;background:#8a9ab0"></div>
<div class="a" style="left:697px;top:77px;width:4px;height:122px;background:#e0e0e0;border:1px solid #d4d4d4"></div>
<div class="a" style="left:717px;top:77px;width:4px;height:105px;background:#e0e0e0;border:1px solid #d4d4d4"></div>
<div class="a" style="left:737px;top:77px;width:4px;height:105px;background:#e0e0e0;border:1px solid #d4d4d4"></div>
<div class="a" style="left:690px;top:147px;width:17px;height:8px;background:#0078d7"></div>
<div class="a" style="left:710px;top:125px;width:17px;height:8px;background:#0078d7"></div>
<div class="a" style="left:730px;top:125px;width:17px;height:8px;background:#cccccc"></div>
<div class="a" style="left:708px;top:189px;width:39px;height:16px;background:#80f480;border:1px solid #3a5a3a"></div>
<svg class="a" style="left:720px;top:193px;" width="14" height="8" viewBox="0 0 14 8"><path d="M1 0.5 V6 H13 V0.5" stroke="#1a7a5a" stroke-width="1.6" fill="none"/></svg>
<svg class="a" style="left:350px;top:215px;" width="8" height="5" viewBox="0 0 8 5"><path d="M4 0 L0 2.5 L4 5 Z M8 0 L4 2.5 L8 5 Z" fill="#111"/></svg>
<svg class="a" style="left:369px;top:215px;" width="8" height="5" viewBox="0 0 8 5"><path d="M0 0 L4 2.5 L0 5 Z M4 0 L8 2.5 L4 5 Z" fill="#111"/></svg>
<svg class="a" style="left:386px;top:214px;" width="12" height="7" viewBox="0 0 12 7"><path d="M0.3 0.5 H1.6 V6.5 H0.3 M11.7 0.5 H10.4 V6.5 H11.7" stroke="#5a5aa8" stroke-width="1.2" fill="none"/><path d="M3.5 0.8 L7.5 3.5 L3.5 6.2 Z" fill="#111"/><path d="M7.5 0.5 V6.5" stroke="#111" stroke-width="0.8"/></svg>
<svg class="a" style="left:405px;top:214px;" width="13" height="7" viewBox="0 0 13 7"><path d="M2.3 0.5 H0.8 V6.5 H2.3 M10.7 0.5 H12.2 V6.5 H10.7" stroke="#e08a8a" stroke-width="1.2" fill="none"/><path d="M4.5 0.8 L8.5 3.5 L4.5 6.2 Z" fill="#111"/></svg>
<div class="a" style="left:427px;top:214px;width:7px;height:7px;background:#111"></div>
<div class="a" style="left:443px;top:210px;width:1px;height:15px;background:#a0a0a0"></div>
<svg class="a" style="left:451px;top:214px;" width="12" height="8" viewBox="0 0 12 8"><path d="M0 3.5 H5" stroke="#e04a5a" stroke-width="1" stroke-dasharray="1.5 0.7"/><path d="M4 0.5 L8 3.5 L4 6.5 Z" fill="#111"/><path d="M11.5 0.5 H9.8 V6.5 H11.5" stroke="#4a4aa8" stroke-width="1.2" fill="none"/></svg>
<svg class="a" style="left:470px;top:214px;" width="12" height="8" viewBox="0 0 12 8"><path d="M0.3 0.5 H2 V6.5 H0.3" stroke="#4a4aa8" stroke-width="1.2" fill="none"/><path d="M3 0.5 L7 3.5 L3 6.5 Z" fill="#111"/><path d="M6.5 3.5 H12" stroke="#e04a5a" stroke-width="1" stroke-dasharray="1.5 0.7"/></svg>
<svg class="a" style="left:489px;top:214px;" width="12" height="8" viewBox="0 0 12 8"><path d="M1.9 0.5 H0.5 V6.5 H1.9" stroke="#4a4aa8" stroke-width="1.2" fill="none"/><path d="M3 0.5 L7 3.5 L3 6.5 Z" fill="#111"/><path d="M6.5 3.5 H11" stroke="#e04a5a" stroke-width="1" stroke-dasharray="1.5 0.7"/></svg>
<svg class="a" style="left:509px;top:214px;" width="12" height="8" viewBox="0 0 12 8"><path d="M0 3.5 H5" stroke="#e04a5a" stroke-width="1" stroke-dasharray="1.5 0.7"/><path d="M4 0.5 L8 3.5 L4 6.5 Z" fill="#111"/><path d="M9.5 0.5 H11.2 V6.5 H9.5" stroke="#4a4aa8" stroke-width="1.2" fill="none"/></svg>
<svg class="a" style="left:528px;top:214px;" width="12" height="8" viewBox="0 0 12 8"><path d="M1.9 0.5 H0.5 V6.5 H1.9" stroke="#4a4aa8" stroke-width="1.2" fill="none"/><path d="M2.5 2.5 H7.5 V0.8 L11 3.5 L7.5 6.2 V4.5 H2.5 Z" fill="#e04a5a"/><path d="M4 2.5 V4.5 M6 2.5 V4.5" stroke="#fff" stroke-width="0.5"/></svg>
<div class="a" style="left:545px;top:210px;width:1px;height:15px;background:#a0a0a0"></div>
<svg class="a" style="left:553px;top:213px;" width="13" height="9" viewBox="0 0 13 9"><path d="M0 4.5 H9" stroke="#4a9a4a" stroke-width="1.2"/><path d="M12.5 0.5 H11 V8.5 H12.5" stroke="#3a3ab0" stroke-width="1.4" fill="none"/></svg>
<svg class="a" style="left:573px;top:213px;" width="13" height="9" viewBox="0 0 13 9"><path d="M0.5 0.5 H2 V8.5 H0.5" stroke="#3a3ab0" stroke-width="1.4" fill="none"/><path d="M3.5 4.5 H13" stroke="#4a9a4a" stroke-width="1.2"/></svg>
<div class="a" style="left:591px;top:210px;width:1px;height:15px;background:#a0a0a0"></div>
<svg class="a" style="left:599px;top:211px;" width="11" height="11" viewBox="0 0 11 11"><path d="M1 5.5 L4 9 L10 1.5" stroke="#3aa040" stroke-width="2" fill="none"/></svg>
<svg class="a" style="left:619px;top:213px;" width="10" height="9" viewBox="0 0 10 9"><path d="M0.5 2.5 H4.5 V0.5 L9.5 4.5 L4.5 8.5 V6.5 H0.5 Z" fill="#2aa8d8" stroke="#1a7aa8" stroke-width="0.6"/></svg>
<div class="a" style="left:636px;top:210px;width:1px;height:15px;background:#a0a0a0"></div>
<svg class="a" style="left:644px;top:209px;" width="13" height="16" viewBox="0 0 13 16"><path d="M3 5 L5.5 8 L10 1.5" stroke="#3aa040" stroke-width="1.8" fill="none"/><text x="0.5" y="13.5" font-size="4.3" font-weight="bold" font-family="Liberation Sans" fill="#2a3a8a" letter-spacing="0.1">AUTO</text></svg>
<div class="a" style="left:660px;top:208px;width:58px;height:18px;background:#cce4f7;border:1px solid #99c9ef"></div>
<div class="a" style="left:679px;top:208px;width:1px;height:18px;background:#b8d8f0"></div>
<div class="a" style="left:698px;top:208px;width:1px;height:18px;background:#b8d8f0"></div>
<svg class="a" style="left:663px;top:210px;" width="14" height="13" viewBox="0 0 14 13"><path d="M1 4 H12 L10.5 9 H2 Z" fill="#2a5aa8" stroke="#1a3a7a" stroke-width="0.6"/><path d="M3 6.5 L6 10.5 L12.5 1.5" stroke="#2aa040" stroke-width="2" fill="none"/></svg>
<svg class="a" style="left:682px;top:209px;" width="13" height="16" viewBox="0 0 13 16"><path d="M2.5 3 H5.5 V1 L9 4.5 L5.5 8 V6 H2.5 Z" fill="#2aa8d8"/><text x="0.5" y="13.5" font-size="4.3" font-weight="bold" font-family="Liberation Sans" fill="#2a3a8a" letter-spacing="0.1">AUTO</text></svg>
<svg class="a" style="left:702px;top:210px;" width="13" height="13" viewBox="0 0 13 13"><defs><linearGradient id="sp" x1="0" y1="0" x2="0" y2="1"><stop offset="0" stop-color="#0a1a90"/><stop offset="0.6" stop-color="#1a50c0"/><stop offset="1" stop-color="#30a0a0"/></linearGradient></defs><rect x="0" y="0" width="13" height="13" fill="url(#sp)"/><path d="M2 13 V4 L3 13 M5 13 V2 L6 13 M8 13 V3 L9 13 M10.5 13 V5 L11.5 13" stroke="#40c0e0" stroke-width="1"/><path d="M0 13 V10 L2 8.5 L4 11 L6 9 L8 11 L10 9 L13 10.5 V13 Z" fill="#d0e040"/><path d="M0 13 V11.5 L3 12 L6 11 L9 12 L13 11.5 V13 Z" fill="#40a040"/><rect x="0.5" y="0.5" width="12" height="12" fill="none" stroke="#0a1a6a" stroke-width="0.8"/></svg>
<svg class="a" style="left:722px;top:211px;" width="11" height="12" viewBox="0 0 11 12"><rect x="2" y="0.5" width="7" height="11" fill="#d04848" stroke="#3a2020" stroke-width="0.9"/><rect x="3.5" y="2" width="4" height="8" fill="#e07a7a"/><path d="M4.5 4 V7" stroke="#fff" stroke-width="0.8"/><path d="M0 1.5 H2 M0 4 H2 M0 6.5 H2 M0 9 H2 M9 1.5 H11 M9 4 H11 M9 6.5 H11 M9 9 H11" stroke="#3a2020" stroke-width="0.9"/></svg>
<div class="a" style="left:739px;top:210px;width:1px;height:15px;background:#a0a0a0"></div>
<div class="a" style="left:747px;top:217px;width:2px;height:1px;background:#aaa"></div>
<div class="a" style="left:339px;top:232px;width:414px;height:1px;background:#e8e8e8"></div>
<div class="a" style="left:339px;top:232px;width:1px;height:120px;background:#e8e8e8"></div>
<div class="a" style="left:752px;top:232px;width:1px;height:121px;background:#6a6a6a"></div>
<div class="a" style="left:339px;top:352px;width:414px;height:1px;background:#6a6a6a"></div>
<div class="a" style="left:344px;top:243px;width:11px;height:11px;background:#fff;border:1px solid #333"></div>
<div class="t" style="left:358px;top:243px;font-size:10.6px;color:#111"><span style="text-decoration:underline">C</span>omment</div>
<div class="a" style="left:412px;top:238px;width:92px;height:20px;background:#e5e5e5;border:1px solid #adadad"></div>
<div class="t" style="left:416px;top:244px;font-size:10.2px;color:#111">Default</div>
<svg class="a" style="left:493px;top:246px;" width="8" height="5" viewBox="0 0 8 5"><path d="M0.5 0.5 L4 4 L7.5 0.5" stroke="#555" stroke-width="1" fill="none"/></svg>
<div class="a" style="left:509px;top:238px;width:33px;height:20px;background:#e1e1e1;border:1px solid #adadad"></div>
<div class="t" style="left:517px;top:244px;font-size:10.2px;color:#111">Edit</div>
<div class="a" style="left:546px;top:238px;width:92px;height:20px;background:#fff;border:1px solid #7a7a7a"></div>
<div class="t" style="left:550px;top:244px;font-size:10.2px;color:#777">Actor</div>
<svg class="a" style="left:627px;top:246px;" width="8" height="5" viewBox="0 0 8 5"><path d="M0.5 0.5 L4 4 L7.5 0.5" stroke="#555" stroke-width="1" fill="none"/></svg>
<div class="a" style="left:643px;top:238px;width:80px;height:20px;background:#fff;border:1px solid #7a7a7a"></div>
<div class="t" style="left:647px;top:244px;font-size:10.2px;color:#777">Effect</div>
<svg class="a" style="left:712px;top:246px;" width="8" height="5" viewBox="0 0 8 5"><path d="M0.5 0.5 L4 4 L7.5 0.5" stroke="#555" stroke-width="1" fill="none"/></svg>
<div class="a" style="left:722px;top:238px;width:26px;height:20px;background:#fff;border:1px solid #7a7a7a"></div>
<div class="t" style="left:732px;top:243px;font-size:10.6px;color:#111">0</div>
<div class="a" style="left:344px;top:262px;width:27px;height:18px;background:#fff;border:1px solid #7a7a7a"></div>
<div class="t" style="left:349px;top:266px;font-size:10.6px;color:#111">0</div>
<div class="a" style="left:373px;top:262px;width:13px;height:9px;background:#e8e8e8;border:1px solid #adadad"></div>
<div class="a" style="left:373px;top:271px;width:13px;height:9px;background:#e8e8e8;border:1px solid #adadad"></div>
<svg class="a" style="left:377px;top:265px;" width="5" height="3" viewBox="0 0 5 3"><path d="M0 3 L2.5 0 L5 3 Z" fill="#222"/></svg>
<svg class="a" style="left:377px;top:275px;" width="5" height="3" viewBox="0 0 5 3"><path d="M0 0 L2.5 3 L5 0 Z" fill="#222"/></svg>
<div class="a" style="left:390px;top:262px;width:54px;height:18px;background:#fff;border:1px solid #7a7a7a"></div>
<div class="t" style="left:394px;top:266px;font-size:10.6px;letter-spacing:-0.45px;color:#111">0:00:00.00</div>
<div class="a" style="left:443px;top:262px;width:52px;height:18px;background:#fff;border:1px solid #7a7a7a"></div>
<div class="t" style="left:447px;top:266px;font-size:10.6px;letter-spacing:-0.45px;color:#111">0:00:05.00</div>
<div class="a" style="left:500px;top:262px;width:53px;height:18px;background:#fff;border:1px solid #7a7a7a"></div>
<div class="t" style="left:504px;top:266px;font-size:10.6px;letter-spacing:-0.45px;color:#111">0:00:05.00</div>
<div class="a" style="left:557px;top:262px;width:34px;height:18px;background:#fff;border:1px solid #7a7a7a"></div>
<div class="t" style="left:571px;top:266px;font-size:10.6px;color:#111">0</div>
<div class="a" style="left:590px;top:262px;width:34px;height:18px;background:#fff;border:1px solid #7a7a7a"></div>
<div class="t" style="left:604px;top:266px;font-size:10.6px;color:#111">0</div>
<div class="a" style="left:623px;top:262px;width:35px;height:18px;background:#fff;border:1px solid #7a7a7a"></div>
<div class="t" style="left:637px;top:266px;font-size:10.6px;color:#111">0</div>
<div class="a" style="left:345px;top:285px;width:19px;height:18px;background:#e1e1e1;border:1px solid #adadad"></div>
<div class="t" style="left:351px;top:289px;font-size:10.6px;font-weight:bold;color:#111">B</div>
<div class="a" style="left:365px;top:285px;width:19px;height:18px;background:#e1e1e1;border:1px solid #adadad"></div>
<div class="t" style="left:372px;top:289px;font-size:10.6px;font-style:italic;font-weight:bold;color:#111">I</div>
<div class="a" style="left:385px;top:285px;width:19px;height:18px;background:#e1e1e1;border:1px solid #adadad"></div>
<div class="t" style="left:391px;top:289px;font-size:10.6px;color:#111"><span style="text-decoration:underline">U</span></div>
<div class="a" style="left:406px;top:285px;width:19px;height:18px;background:#e1e1e1;border:1px solid #adadad"></div>
<div class="t" style="left:411px;top:289px;font-size:10.6px;color:#111"><span style="text-decoration:line-through">S</span></div>
<div class="a" style="left:426px;top:285px;width:19px;height:18px;background:#e1e1e1;border:1px solid #adadad"></div>
<div class="t" style="left:430px;top:289px;font-size:10.6px;font-style:italic;font-weight:bold;color:#111">fn</div>
<div class="a" style="left:450px;top:285px;width:19px;height:18px;background:#e1e1e1;border:1px solid #adadad"></div>
<div class="t" style="left:453px;top:289px;font-size:10.6px;letter-spacing:-0.5px;"><span style="color:#e03030">A</span><span style="color:#111">B</span></div>
<div class="a" style="left:470px;top:285px;width:19px;height:18px;background:#e1e1e1;border:1px solid #adadad"></div>
<div class="t" style="left:473px;top:289px;font-size:10.6px;letter-spacing:-0.5px;"><span style="color:#111">A</span><span style="color:#e03030">B</span></div>
<div class="a" style="left:490px;top:285px;width:19px;height:18px;background:#e1e1e1;border:1px solid #adadad"></div>
<div class="t" style="left:493px;top:289px;font-size:10.6px;letter-spacing:-0.5px;color:#8a1010;font-weight:bold;text-shadow:0 0 1px #e03030">AB</div>
<div class="a" style="left:510px;top:285px;width:19px;height:18px;background:#e1e1e1;border:1px solid #adadad"></div>
<div class="t" style="left:513px;top:289px;font-size:10.6px;letter-spacing:-0.5px;color:#701010;font-weight:bold;text-shadow:1px 1px 0 #c04040">AB</div>
<div class="a" style="left:535px;top:285px;width:18px;height:18px;background:#e1e1e1;border:1px solid #adadad"></div>
<svg class="a" style="left:538px;top:288px;" width="12" height="12" viewBox="0 0 12 12"><path d="M1 6 L4.5 10 L11 2" stroke="#3aa040" stroke-width="2" fill="none"/></svg>
<svg class="a" style="left:562px;top:288px;" width="12" height="12" viewBox="0 0 12 12"><circle cx="6" cy="6" r="5.3" fill="#fff" stroke="#333" stroke-width="1"/><circle cx="6" cy="6" r="2.8" fill="#111"/></svg>
<div class="t" style="left:576px;top:288px;font-size:10.6px;color:#111">T<span style="text-decoration:underline">i</span>me</div>
<svg class="a" style="left:607px;top:288px;" width="12" height="12" viewBox="0 0 12 12"><circle cx="6" cy="6" r="5.3" fill="#fff" stroke="#333" stroke-width="1"/></svg>
<div class="t" style="left:621px;top:288px;font-size:10.6px;letter-spacing:-0.5px;color:#111">F<span style="text-decoration:underline">r</span>ame</div>
<div class="a" style="left:658px;top:288px;width:11px;height:11px;background:#fff;border:1px solid #333"></div>
<div class="t" style="left:671px;top:288px;font-size:10.6px;letter-spacing:-0.25px;color:#111">Show Original</div>
<div class="a" style="left:344px;top:307px;width:403px;height:40px;background:#fff;border:1px solid #a0a0a0;border-right-color:#e4e4e4;border-bottom-color:#e4e4e4"></div>
<div class="a" style="left:345px;top:308px;width:401px;height:1px;background:#696969"></div>
<div class="a" style="left:345px;top:308px;width:1px;height:38px;background:#696969"></div>
<div class="a" style="left:0px;top:355px;width:755px;height:2px;background:#f4f4f4"></div>
<div class="a" style="left:0px;top:358px;width:755px;height:1px;background:#646464"></div>
<div class="a" style="left:1px;top:358px;width:1px;height:67px;background:#7a7a7a"></div>
<div class="a" style="left:2px;top:359px;width:740px;height:66px;background:#fff"></div>
<div class="a" style="left:2px;top:359px;width:740px;height:14px;background:#a5cde5"></div>
<div class="a" style="left:2px;top:373px;width:739px;height:1px;background:#d0a8dc"></div>
<div class="a" style="left:2px;top:374px;width:739px;height:13px;background:#cdfce3"></div>
<div class="a" style="left:2px;top:387px;width:739px;height:1px;background:#d0a8dc"></div>
<div class="a" style="left:740px;top:373px;width:1px;height:15px;background:#d0a8dc"></div>
<div class="a" style="left:2px;top:374px;width:15px;height:13px;background:#c2ecca"></div>
<div class="a" style="left:2px;top:388px;width:15px;height:37px;background:#c2ecca"></div>
<div class="a" style="left:17px;top:359px;width:1px;height:14px;background:#b4d0e6"></div>
<div class="a" style="left:17px;top:374px;width:1px;height:13px;background:#c0dcd0"></div>
<div class="a" style="left:70px;top:359px;width:1px;height:14px;background:#b4d0e6"></div>
<div class="a" style="left:70px;top:374px;width:1px;height:13px;background:#c0dcd0"></div>
<div class="a" style="left:125px;top:359px;width:1px;height:14px;background:#b4d0e6"></div>
<div class="a" style="left:125px;top:374px;width:1px;height:13px;background:#c0dcd0"></div>
<div class="a" style="left:149px;top:359px;width:1px;height:14px;background:#b4d0e6"></div>
<div class="a" style="left:149px;top:374px;width:1px;height:13px;background:#c0dcd0"></div>
<div class="a" style="left:188px;top:359px;width:1px;height:14px;background:#b4d0e6"></div>
<div class="a" style="left:188px;top:374px;width:1px;height:13px;background:#c0dcd0"></div>
<div class="t" style="left:7px;top:362px;font-size:9.8px;color:#111;">#</div>
<div class="t" style="left:33px;top:362px;font-size:9.8px;color:#111;">Start</div>
<div class="t" style="left:89px;top:362px;font-size:9.8px;letter-spacing:-0.4px;color:#111">End</div>
<div class="t" style="left:129px;top:362px;font-size:9.8px;letter-spacing:-1.1px;color:#111">CPS</div>
<div class="t" style="left:152px;top:362px;font-size:9.8px;color:#111;letter-spacing:-0.15px">Style</div>
<div class="t" style="left:191px;top:362px;font-size:9.8px;letter-spacing:0.3px;color:#111;">Text</div>
<div class="t" style="left:8px;top:376px;font-size:9.8px;color:#111;">1</div>
<div class="t" style="left:21px;top:376px;font-size:9.8px;color:#111;letter-spacing:-0.05px">0:00:00.00</div>
<div class="t" style="left:75px;top:376px;font-size:9.8px;color:#111;letter-spacing:-0.05px">0:00:05.00</div>
<div class="t" style="left:134px;top:376px;font-size:9.8px;color:#111;">0</div>
<div class="t" style="left:152px;top:376px;font-size:9.8px;color:#111;letter-spacing:-0.15px">Default</div>
<div class="a" style="left:742px;top:358px;width:13px;height:67px;background:#f0f0f0"></div>
<svg class="a" style="left:745px;top:364px;" width="8" height="5" viewBox="0 0 8 5"><path d="M0.5 4.5 L4 1 L7.5 4.5" stroke="#8a8a8a" stroke-width="1" fill="none"/></svg>
</body></html>
